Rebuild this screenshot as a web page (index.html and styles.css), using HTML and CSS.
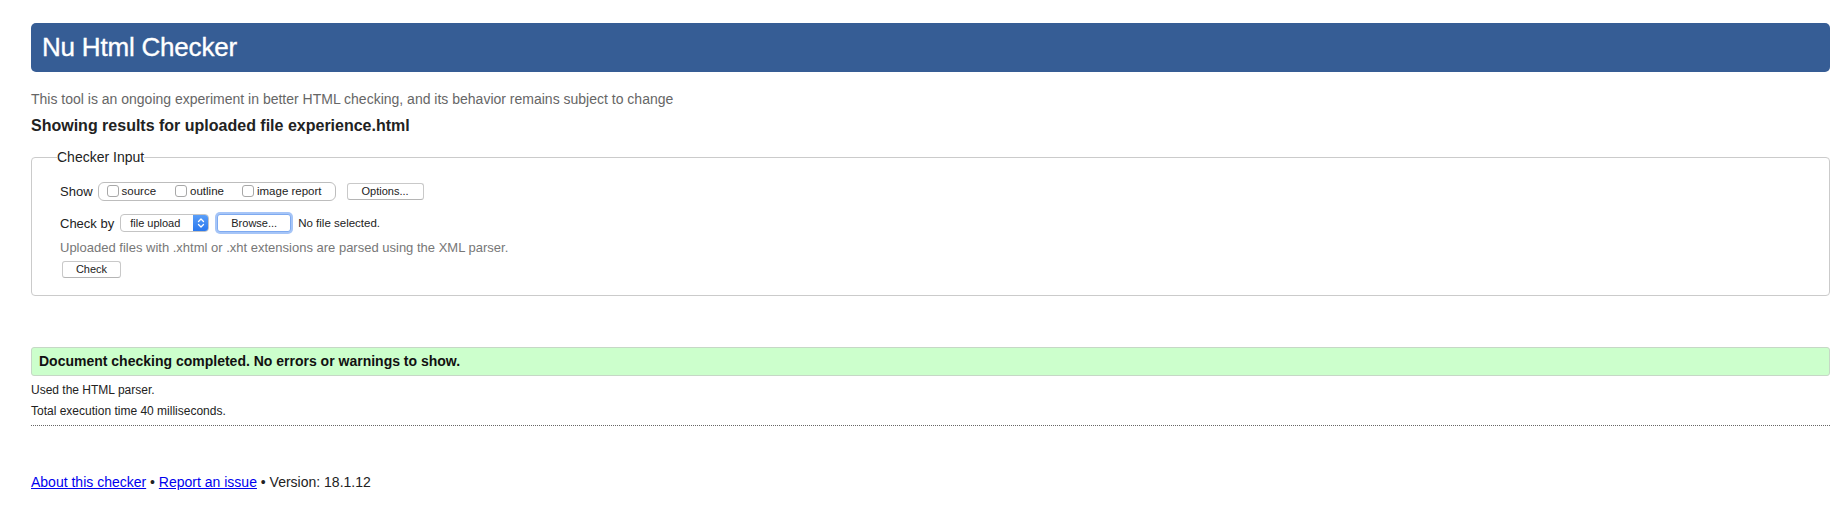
FILE: index.html
```html
<!DOCTYPE html>
<html lang="en">
<head>
<meta charset="utf-8">
<title>Showing results for uploaded file experience.html - Nu Html Checker</title>
<link rel="stylesheet" href="styles.css">
</head>
<body>
<div class="page">
  <h1 class="title">Nu Html Checker</h1>
  <p class="subtitle">This tool is an ongoing experiment in better HTML checking, and its behavior remains subject to change</p>
  <h2 class="showing">Showing results for uploaded file experience.html</h2>
  <form class="form">
    <fieldset class="input">
      <legend class="legend">Checker Input</legend>
      <div class="row row-show">
        <span class="label">Show</span>
        <span class="group">
          <label class="opt opt-source"><input type="checkbox" class="cb">source</label>
          <label class="opt opt-outline"><input type="checkbox" class="cb">outline</label>
          <label class="opt"><input type="checkbox" class="cb">image report</label>
        </span>
        <button type="button" class="btn btn-options">Options...</button>
      </div>
      <div class="row row-check">
        <span class="label">Check by</span>
        <span class="select">
          <span class="select-text">file upload</span>
          <span class="select-arrow">
            <svg width="8" height="12" viewBox="0 0 8 12"><path d="M1.5 4.5 L4 2 L6.5 4.5 M1.5 7.5 L4 10 L6.5 7.5" fill="none" stroke="#fff" stroke-width="1.3" stroke-linecap="round" stroke-linejoin="round"/></svg>
          </span>
        </span>
        <button type="button" class="btn btn-browse">Browse...</button>
        <span class="nofile">No file selected.</span>
      </div>
      <p class="note">Uploaded files with .xhtml or .xht extensions are parsed using the XML parser.</p>
      <button type="button" class="btn btn-check">Check</button>
    </fieldset>
  </form>
  <p class="success">Document checking completed. No errors or warnings to show.</p>
  <p class="details details-first">Used the HTML parser.</p>
  <p class="details">Total execution time 40 milliseconds.</p>
  <hr class="rule">
  <p class="footer"><a href="#about">About this checker</a> • <a href="#report">Report an issue</a> • Version: 18.1.12</p>
</div>
</body>
</html>
```
FILE: styles.css
```css
html, body {
  margin: 0;
  padding: 0;
  background: #fff;
}
body {
  font-family: "Liberation Sans", Arial, Helvetica, sans-serif;
  color: #222;
  font-size: 13px;
}
.page {
  padding: 23px 1px 0 31px;
}
.title {
  margin: 0;
  height: 49px;
  line-height: 48px;
  padding: 0 11px;
  background: #365d95;
  color: #fff;
  font-size: 26px;
  font-weight: normal;
  -webkit-text-stroke: 0.35px #fff;
  border-radius: 5px;
  letter-spacing: -0.2px;
}
.subtitle {
  margin: 18px 0 0;
  color: #666;
  font-size: 14px;
  line-height: 18px;
}
.showing {
  margin: 8px 0 0;
  font-size: 16px;
  line-height: 20px;
  font-weight: bold;
  color: #222;
}
.form {
  margin: 0;
}
.input {
  margin: 12px 0 0;
  padding: 15px 0 17px 28px;
  border: 1px solid #cbcbcb;
  border-radius: 4px;
  min-width: 0;
}
.legend {
  margin-left: -3px;
  padding: 0;
  font-size: 14px;
  line-height: 18px;
  color: #222;
}
.row {
  display: flex;
  align-items: center;
  height: 20px;
}
.row-check {
  margin-top: 12px;
}
.label {
  font-size: 13px;
  margin-right: 5px;
}
.group {
  display: flex;
  align-items: center;
  height: 17px;
  padding: 0 7px 0 8px;
  border: 1px solid #bdbdbd;
  border-radius: 6px;
  width: 221px;
  box-sizing: content-box;
}
.opt {
  display: flex;
  align-items: center;
  font-size: 11.5px;
  color: #222;
}
.opt-source { margin-right: 19px; }
.opt-outline { margin-right: 18px; }
.cb {
  appearance: none;
  -webkit-appearance: none;
  margin: 0 3px 0 0;
  width: 12px;
  height: 12px;
  border: 1px solid #a8a8a8;
  border-radius: 3px;
  background: #fff;
  box-sizing: border-box;
}
.btn {
  font-family: "Liberation Sans", Arial, Helvetica, sans-serif;
  font-size: 11px;
  color: #222;
  background: #fff;
  border: 1px solid #c9c9c9;
  border-bottom-color: #b5b5b5;
  border-radius: 3px;
  height: 17px;
  padding: 0;
  line-height: 15px;
}
.btn-options {
  margin-left: 11px;
  width: 77px;
}
.select {
  display: flex;
  align-items: stretch;
  width: 89px;
  height: 18px;
  border: 1px solid #c4c4c4;
  border-radius: 4px;
  box-sizing: border-box;
  overflow: hidden;
  background: #fff;
  margin-left: 1px;
}
.select-text {
  flex: 1;
  font-size: 11px;
  line-height: 16px;
  padding-left: 9px;
}
.select-arrow {
  width: 15px;
  background: linear-gradient(#5a9ef8, #2a78ee);
  display: flex;
  align-items: center;
  justify-content: center;
}
.btn-browse {
  margin-left: 8px;
  width: 74px;
  height: 18px;
  border-color: #7eaaf0;
  box-shadow: 0 0 0 2px #a6c5f7;
}
.nofile {
  margin-left: 7px;
  font-size: 11.5px;
}
.note {
  margin: 6px 0 0;
  color: #777;
  font-size: 13px;
  line-height: 18px;
}
.btn-check {
  display: block;
  margin: 4px 0 0 2px;
  width: 59px;
}
.success {
  margin: 51px 0 0;
  height: 27px;
  line-height: 27px;
  padding: 0 7px;
  background: #ccffcc;
  border: 1px solid #c6d8c6;
  border-radius: 3px;
  font-weight: bold;
  font-size: 14px;
  color: #111;
}
.details {
  margin: 0;
  font-size: 12px;
  line-height: 14px;
  color: #222;
}
.details-first {
  margin-top: 7px;
}
.details + .details {
  margin-top: 7px;
}
.rule {
  margin: 7px 0 0;
  border: 0;
  border-top: 1px dotted #666;
  height: 0;
}
.footer {
  margin: 48px 0 0;
  font-size: 14px;
  line-height: 16px;
  color: #222;
}
.footer a {
  color: #0000ee;
  text-decoration: underline;
}
```
